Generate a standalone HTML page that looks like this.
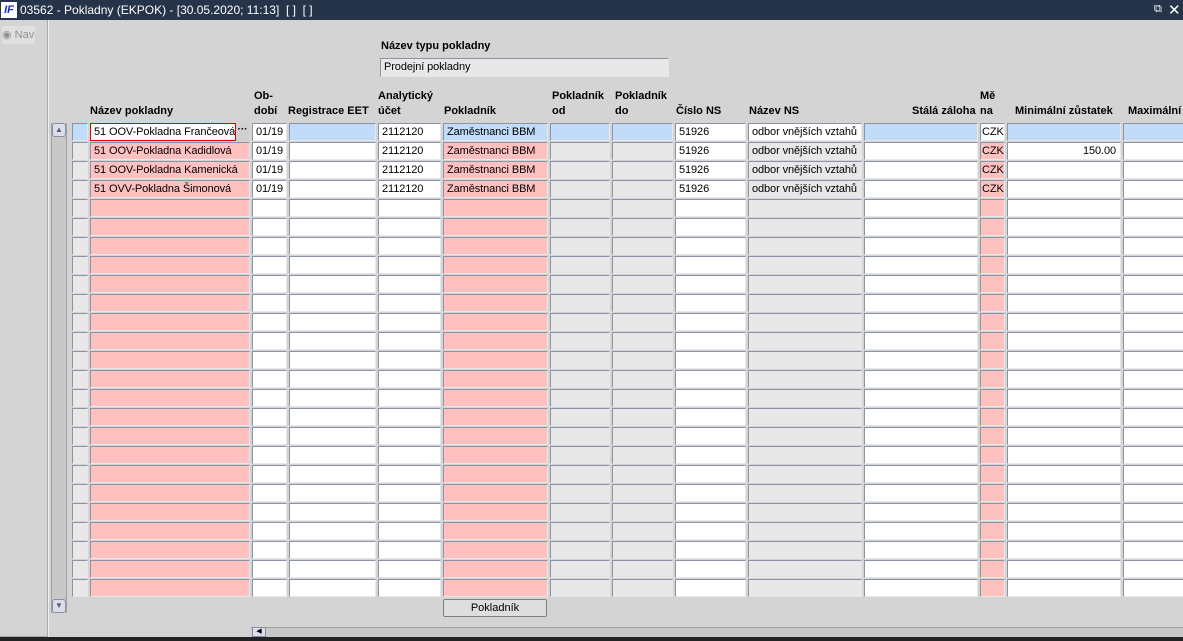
<!DOCTYPE html>
<html><head><meta charset="utf-8"><style>
*{box-sizing:border-box;margin:0;padding:0}
body{width:1183px;height:641px;overflow:hidden;background:#d4d4d4;font-family:"Liberation Sans",Arial,sans-serif;font-size:11px;color:#000;position:relative}
.abs{position:absolute}
#title{left:0;top:0;width:1183px;height:20px;background:#26344a;color:#fff;font-size:12px;line-height:20px;padding-left:20px;white-space:nowrap}
#logo{left:1px;top:2px;width:16px;height:16px;background:#fff;color:#1a2ec0;font-weight:bold;font-style:italic;font-size:11px;line-height:16px;text-align:center}
.c{position:absolute;height:18px;border:1px solid #8a94a4;border-right-color:#e8e8e8;border-bottom-color:#e8e8e8;line-height:16px;padding-left:3px;white-space:nowrap;overflow:hidden;letter-spacing:-0.1px}
.h{position:absolute;font-weight:bold;line-height:15px;white-space:nowrap}
.w{background:#fff}.b{background:#c0dcf8}.p{background:#ffc0c0}.g{background:#e8e8e8}
</style></head><body>
<div id="title" class="abs">03562 - Pokladny (EKPOK) - [30.05.2020; 11:13]&nbsp; [ ]&nbsp; [ ]</div>
<div id="logo" class="abs">IF</div>
<div class="abs" style="left:1154px;top:3px;color:#fff;font-size:11px">⧉</div>
<div class="abs" style="left:1168px;top:1px;color:#fff;font-size:15px">✕</div>
<div class="abs" style="left:0;top:20px;width:48px;height:617px;border-right:1px solid #a8a8a8;border-bottom:1px solid #a8a8a8"></div>
<div class="abs" style="left:2px;top:26px;width:33px;height:18px;background:#e0e0e0;color:#909090;line-height:18px;font-size:11px;white-space:nowrap">◉ Nav</div>
<div class="abs" style="left:48px;top:20px;width:1px;height:617px;background:#f0f0f0"></div>
<div class="abs" style="left:0;top:637px;width:1183px;height:4px;background:#222"></div>
<div class="h" style="left:381px;top:39px">Název typu pokladny</div>
<div class="c g" style="left:380px;top:58px;width:289px;height:19px;line-height:17px">Prodejní pokladny</div>
<div class="h" style="left:90px;top:104px">Název pokladny</div>
<div class="h" style="left:254px;top:89px">Ob-<br>dobí</div>
<div class="h" style="left:288px;top:104px">Registrace EET</div>
<div class="h" style="left:378px;top:89px">Analytický<br>účet</div>
<div class="h" style="left:444px;top:104px">Pokladník</div>
<div class="h" style="left:552px;top:89px">Pokladník<br>od</div>
<div class="h" style="left:615px;top:89px">Pokladník<br>do</div>
<div class="h" style="left:676px;top:104px">Číslo NS</div>
<div class="h" style="left:749px;top:104px">Název NS</div>
<div class="h" style="left:912px;top:104px">Stálá záloha</div>
<div class="h" style="left:980px;top:89px">Mě<br>na</div>
<div class="h" style="left:1015px;top:104px">Minimální zůstatek</div>
<div class="h" style="left:1128px;top:104px">Maximální</div>
<div class="abs" style="left:51px;top:123px;width:16px;height:490px;background:#c8c8c8;border-left:1px solid #a0a0a0;border-right:1px solid #a0a0a0"></div>
<div class="abs" style="left:52px;top:123px;width:14px;height:14px;background:#dde;border:1px solid #8090a0;border-radius:3px;font-size:8px;line-height:12px;text-align:center;color:#506070">▲</div>
<div class="abs" style="left:52px;top:599px;width:14px;height:14px;background:#dde;border:1px solid #8090a0;border-radius:3px;font-size:8px;line-height:12px;text-align:center;color:#506070">▼</div>
<div class="abs" style="left:251px;top:627px;width:932px;height:10px;background:#c8c8c8;border-top:1px solid #a0a0a0"></div>
<div class="abs" style="left:252px;top:627px;width:14px;height:10px;background:#dde;border:1px solid #8090a0;font-size:7px;line-height:8px;text-align:center">◀</div>
<div class="abs" style="left:443px;top:599px;width:104px;height:18px;background:#dedede;border:1px solid #808080;border-radius:2px;text-align:center;line-height:16px;font-size:11px">Pokladník</div>
<div id="grid"></div>
<script>
var cols=[[72,16],[90,160],[252,35],[289,87],[378,63],[443,105],[550,60],[612,61],[675,71],[748,114],[864,114],[980,25],[1007,114],[1123,70]];
var first=['b','w','w','b','w','b','b','b','w','w','b','w','b','b'];
var rest=['g','p','w','w','w','p','g','g','w','g','w','p','w','w'];
var data=[
['','51 OOV-Pokladna Frančeová','01/19','','2112120','Zaměstnanci BBM','','','51926','odbor vnějších vztahů','','CZK','',''],
['','51 OOV-Pokladna Kadidlová','01/19','','2112120','Zaměstnanci BBM','','','51926','odbor vnějších vztahů','','CZK','150.00',''],
['','51 OOV-Pokladna Kamenická','01/19','','2112120','Zaměstnanci BBM','','','51926','odbor vnějších vztahů','','CZK','',''],
['','51 OVV-Pokladna Šimonová','01/19','','2112120','Zaměstnanci BBM','','','51926','odbor vnějších vztahů','','CZK','','']];
var h='';
for(var r=0;r<25;r++){var y=123+r*19;var cl=r==0?first:rest;
for(var i=0;i<cols.length;i++){var t=(data[r]||[])[i]||'';var st='left:'+cols[i][0]+'px;top:'+y+'px;width:'+cols[i][1]+'px;';
if(i==12&&t)st+='text-align:right;padding-right:4px;';
if(i==11)st+='padding-left:1px;';
if(r==0&&i==1)st+='border:1px solid #e00000;width:146px;';
h+='<div class="c '+cl[i]+'" style="'+st+'">'+t+'</div>';}
}
h+='<div class="abs" style="left:236px;top:123px;width:13px;height:18px;background:#d0d0d0;font-weight:bold;font-size:10px;line-height:14px;text-align:center">···</div>';
document.getElementById('grid').innerHTML=h;
</script>
</body></html>
